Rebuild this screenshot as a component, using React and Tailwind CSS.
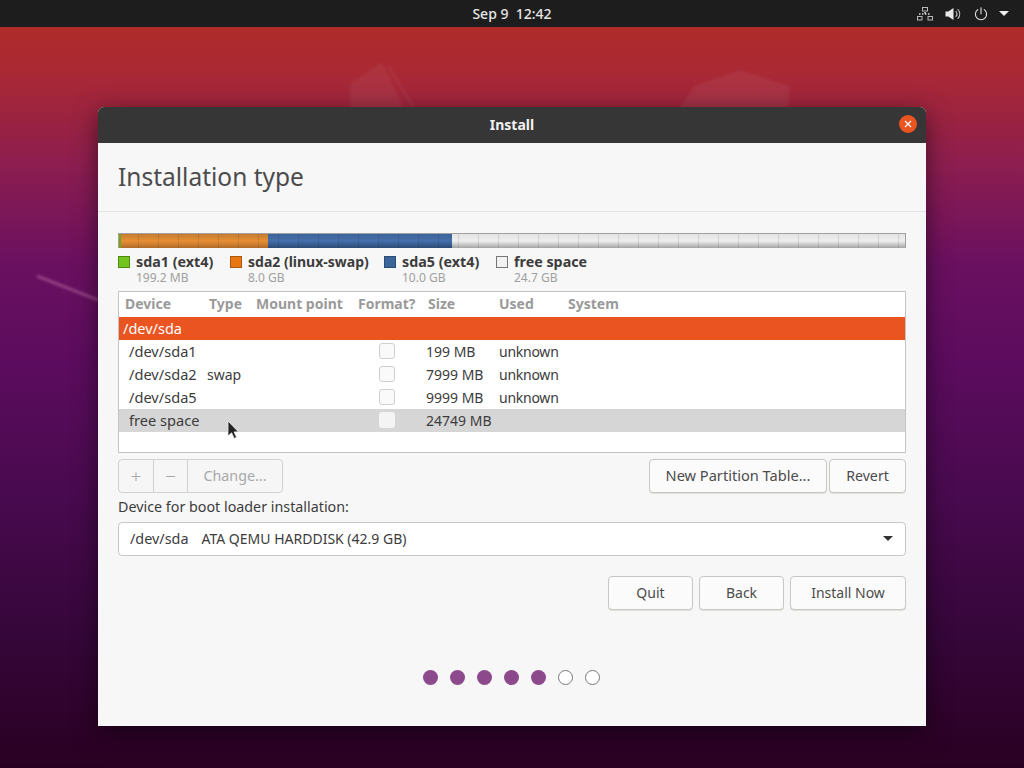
const FONT = "font-['Noto_Sans','Open_Sans',sans-serif]";

const segments = [
  { width: "w-[149px]", color: "from-[#c47c30] via-[#e88f35] to-[#b06a28]" },
  { width: "w-[184px]", color: "from-[#3c6299] via-[#4470ab] to-[#2c4a76]" },
  { width: "flex-1", color: "from-[#e4e4e4] via-[#eeeeee] to-[#a4a4a4]" },
];

const legend = [
  { name: "sda1 (ext4)", size: "199.2 MB", swatch: "bg-[#73c41d] border-[#4f8a14]", gap: "w-[112px]", text: "text-[14.3px]" },
  { name: "sda2 (linux-swap)", size: "8.0 GB", swatch: "bg-[#e9750f] border-[#a85a12]", gap: "w-[154px]", text: "text-[14px]" },
  { name: "sda5 (ext4)", size: "10.0 GB", swatch: "bg-[#3b6499] border-[#2c4c78]", gap: "w-[112px]", text: "text-[14.3px]" },
  { name: "free space", size: "24.7 GB", swatch: "bg-[#f2f2f2] border-[#777777]", gap: "w-[120px]", text: "text-[14.3px]" },
];

const rows = [
  { device: "/dev/sda1", type: "", size: "199 MB", used: "unknown" },
  { device: "/dev/sda2", type: "swap", size: "7999 MB", used: "unknown" },
  { device: "/dev/sda5", type: "", size: "9999 MB", used: "unknown" },
  { device: "free space", type: "", size: "24749 MB", used: "", selected: true },
];

const NetworkIcon = () => (
  <svg width="16" height="14" viewBox="0 0 16 14" fill="none" stroke="#b8b8b8" strokeWidth="1">
    <rect x="5.5" y="0.5" width="5" height="3.5" />
    <rect x="0.5" y="9.5" width="4.5" height="3.5" />
    <rect x="11" y="9.5" width="4.5" height="3.5" />
    <path d="M2 7h12M8 5v2" stroke="#d8d8d8" strokeDasharray="1.5 1.5" strokeWidth="1.6" />
  </svg>
);

const VolumeIcon = () => (
  <svg width="16" height="14" viewBox="0 0 16 14" fill="none">
    <path d="M0.5 4.5h2.8L8.5 1v12L3.3 9.5H0.5z" fill="#e8e8e8" />
    <path d="M11 4.5c1.2 1.5 1.2 3.5 0 5M13 2.5c2.2 2.6 2.2 6.4 0 9" stroke="#d0d0d0" strokeWidth="1.1" strokeLinecap="round" />
  </svg>
);

const PowerIcon = () => (
  <svg width="14" height="14" viewBox="0 0 14 14" fill="none" stroke="#e0e0e0" strokeWidth="1.1" strokeLinecap="round">
    <path d="M7 0.8v6" />
    <path d="M3.8 2.6a5.6 5.6 0 1 0 6.4 0" />
  </svg>
);

const Wallpaper = () => (
  <svg className="absolute inset-0 blur-[1.5px]" width="1024" height="768" viewBox="0 0 1024 768" fill="none">
    <path d="M350 108V84l32-22 14 28 8 18z" fill="#ffffff" fillOpacity="0.05" />
    <path d="M388 66l26 42" stroke="#ffffff" strokeOpacity="0.08" strokeWidth="2" />
    <path d="M680 108l14-22 46-16 50 16-2 22z" fill="#ffffff" fillOpacity="0.06" />
    <path d="M37 276l61 24" stroke="#e8a0c8" strokeOpacity="0.5" strokeWidth="2" />
  </svg>
);

const Cursor = () => (
  <svg className="absolute left-[226px] top-[420px]" width="14" height="20" viewBox="0 0 14 20">
    <path d="M2 1v15l3.6-3.2 2.6 5.6 2.4-1.1-2.6-5.4H12.4z" fill="#222222" stroke="#eeeeee" strokeWidth="0.8" />
  </svg>
);

const Button = ({ children, className = "" }) => (
  <div className={`h-[34px] pb-[1px] flex items-center justify-center bg-[#fbfbfb] border border-[#c9c7c3] rounded-[4px] text-[#4c4c4c] shadow-[0_1px_0_#e2e0dc] ${className}`}>
    {children}
  </div>
);

const Checkbox = ({ selected }) => (
  <div className={`-mt-[1px] w-[16px] h-[16px] rounded-[3px] ${selected ? "bg-[#f4f4f4]" : "bg-[#fafafa] border border-[#cfcfcf]"}`} />
);

export default function App() {
  return (
    <div className={`relative w-[1024px] h-[768px] overflow-hidden bg-[linear-gradient(180deg,#b02c2a_3.5%,#a82835_10%,#8b1d50_22%,#6b1060_34%,#5c0c5e_47%,#480a4e_65%,#340638_84%,#2a0022_100%)] ${FONT}`}>
      <Wallpaper />

      {/* Top bar */}
      <div className="relative h-[27px] bg-[#1d1d1d] flex items-center text-[#e6e6e6]">
        <div className="absolute inset-x-0 text-center text-[14px] font-medium">Sep 9&nbsp;&nbsp;12:42</div>
        <div className="ml-auto mr-[15px] flex items-center">
          <NetworkIcon />
          <div className="ml-[12px]"><VolumeIcon /></div>
          <div className="ml-[13px]"><PowerIcon /></div>
          <div className="ml-[11px] w-0 h-0 border-x-[5px] border-x-transparent border-t-[5px] border-t-[#f0f0f0]" />
        </div>
      </div>

      {/* Installer window */}
      <div className="relative ml-[98px] mt-[80px] w-[828px] h-[619px] bg-[#f7f7f7] rounded-t-[6px] shadow-[0_6px_24px_rgba(0,0,0,0.5)] flex flex-col">
        <div className="relative h-[36px] pb-[2px] shrink-0 bg-[#363636] rounded-t-[6px] flex items-center justify-center">
          <span className="text-[14px] font-bold text-[#f2f2f2]">Install</span>
          <div className="absolute right-[9px] top-[8px] w-[18px] h-[18px] rounded-full bg-[#e95420] flex items-center justify-center">
            <svg width="8" height="8" viewBox="0 0 8 8" stroke="#ffffff" strokeWidth="1.2">
              <path d="M1 1l6 6M7 1l-6 6" />
            </svg>
          </div>
        </div>

        <div className="h-[69px] pt-[1px] shrink-0 pl-[20px] border-b border-[#e3e3e3] flex items-center">
          <h1 className="text-[24.5px] text-[#4c4c4c]">Installation type</h1>
        </div>

        <div className="flex-1 px-[20px] pt-[21px] flex flex-col">
          {/* Partition bar */}
          <div className="relative h-[15px] flex border-x border-t border-[#a0a0a0] overflow-hidden">
            {segments.map((segment, index) => (
              <div key={index} className={`h-full bg-gradient-to-b ${segment.width} ${segment.color}`} />
            ))}
            <div className="absolute inset-0 bg-[repeating-linear-gradient(90deg,transparent_0,transparent_19px,rgba(0,0,0,0.1)_19px,rgba(0,0,0,0.1)_20px)]" />
            <div className="absolute left-0 inset-y-0 w-[2px] bg-[#73a41d]" />
          </div>

          {/* Legend */}
          <div className="mt-[5px] h-[32px] flex">
            {legend.map((item) => (
              <div key={item.name} className={`flex ${item.gap}`}>
                <div className={`mt-[3px] w-[12px] h-[12px] border ${item.swatch}`} />
                <div className="ml-[6px] flex flex-col whitespace-nowrap">
                  <span className={`leading-[17px] font-bold text-[#3c3c3c] ${item.text}`}>{item.name}</span>
                  <span className="text-[12px] leading-[15px] text-[#a0a0a0]">{item.size}</span>
                </div>
              </div>
            ))}
          </div>

          {/* Partition table */}
          <div className="mt-[6px] h-[162px] bg-white border border-[#c4c4c4] text-[14px] text-[#3c3c3c]">
            <div className="h-[25px] pb-[2px] flex items-center font-bold text-[#9a9a9a]">
              <span className="w-[90px] pl-[6px]">Device</span>
              <span className="w-[47px]">Type</span>
              <span className="w-[102px]">Mount point</span>
              <span className="w-[70px]">Format?</span>
              <span className="w-[71px]">Size</span>
              <span className="w-[69px]">Used</span>
              <span>System</span>
            </div>
            <div className="h-[23px] bg-[#e95420] text-white text-[14.5px] flex items-center pl-[4px]">/dev/sda</div>
            {rows.map((row) => (
              <div key={row.device} className={`h-[23px] flex items-center ${row.selected ? "bg-[#d6d6d6]" : ""}`}>
                <span className="w-[88px] pl-[10px] text-[14.6px]">{row.device}</span>
                <span className="w-[172px]">{row.type}</span>
                <span className="w-[47px]"><Checkbox selected={row.selected} /></span>
                <span className="w-[73px]">{row.size}</span>
                <span className="tracking-[-0.25px]">{row.used}</span>
              </div>
            ))}
          </div>

          {/* Table actions */}
          <div className="mt-[6px] flex">
            <div className="h-[34px] flex border border-[#d2d0cc] rounded-[4px] bg-[#f6f6f6] text-[#a8a8a8]">
              <div className="w-[35px] flex items-center justify-center border-r border-[#d2d0cc] text-[19px] font-light">+</div>
              <div className="w-[34px] flex items-center justify-center border-r border-[#d2d0cc] text-[19px] font-light">−</div>
              <div className="w-[94px] pb-[1px] flex items-center justify-center text-[14.3px]">Change...</div>
            </div>
            <Button className="ml-auto w-[178px] text-[14.6px]">New Partition Table...</Button>
            <Button className="ml-[2px] w-[77px] text-[14.2px]">Revert</Button>
          </div>

          <div className="mt-[2px] h-[24px] flex items-center text-[14.3px] text-[#3c3c3c]">Device for boot loader installation:</div>

          <div className="mt-[3px] h-[34px] pb-[1px] flex items-center px-[11px] bg-white border border-[#c9c7c3] rounded-[4px] text-[#3c3c3c]">
            <span className="text-[14.4px]">/dev/sda</span>
            <span className="ml-[13px] text-[14px]">ATA QEMU HARDDISK (42.9 GB)</span>
            <div className="ml-auto mr-[1px] w-0 h-0 border-x-[5px] border-x-transparent border-t-[5px] border-t-[#333333]" />
          </div>

          <div className="mt-[20px] flex justify-end gap-[6px]">
            <Button className="w-[85px] text-[14px]">Quit</Button>
            <Button className="w-[85px] text-[14px]">Back</Button>
            <Button className="w-[116px] text-[14px]">Install Now</Button>
          </div>

          {/* Progress dots */}
          <div className="mt-[60px] pr-[2px] flex justify-center gap-[12px]">
            {[0, 1, 2, 3, 4].map((dot) => (
              <div key={dot} className="w-[15px] h-[15px] rounded-full bg-[#8c4a8c]" />
            ))}
            {[5, 6].map((dot) => (
              <div key={dot} className="w-[15px] h-[15px] rounded-full bg-white border border-[#777777]" />
            ))}
          </div>
        </div>
      </div>

      <Cursor />
    </div>
  );
}
